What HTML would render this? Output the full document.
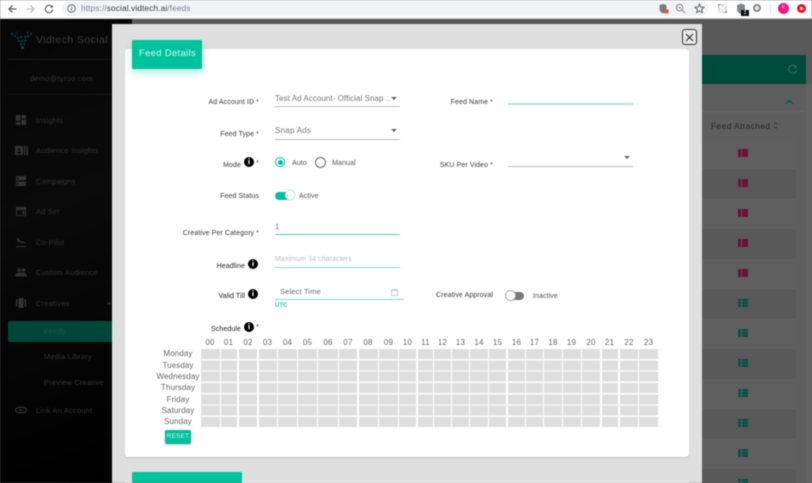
<!DOCTYPE html>
<html><head><meta charset="utf-8"><title>Feeds</title>
<style>
html,body{margin:0;padding:0;width:812px;height:483px;overflow:hidden;background:#5a5a5a}
#r{position:relative;width:812px;height:483px;overflow:hidden;filter:blur(.4px);font-family:"Liberation Sans",sans-serif}
#r div,#r span,#r svg{position:absolute}
#r div span{position:static}
.t{white-space:nowrap;line-height:12px}
.l{font-size:7px;color:#3a3a3a;text-align:right;white-space:nowrap;line-height:12px;letter-spacing:.1px;margin-top:1px}
.k{color:#222}
.m{font-size:7.500px;color:#333;left:36px;white-space:nowrap;line-height:12px;letter-spacing:.2px;margin-top:1px}
.d{font-size:8px;color:#666;white-space:nowrap;line-height:11px;width:50px;text-align:center;left:153px;letter-spacing:.1px}
.h{font-size:8px;color:#666;top:337px;line-height:12px;text-align:center;letter-spacing:.2px}
.c{top:349px;height:79px;background:repeating-linear-gradient(to bottom,#dedede 0,#dedede 10px,#fff 10px,#fff 11.33px)}
.row{left:702px;width:94px;height:30px;background:#5f5f5f}
.ic{left:738px;width:10px;height:8px}
.ic::after{content:"";position:absolute;left:2.500px;top:0;width:.7px;height:8px;background:#5a5a5a}
.re{background:repeating-linear-gradient(#7a0a37 0 2px,#4d2030 2px 3px)}
.gr{background:repeating-linear-gradient(#06503f 0 2px,#2f5a50 2px 3px)}
.i{width:10px;height:10px;border-radius:50%;background:#000;color:#fff;font:bold 8px/10px "Liberation Serif",serif;text-align:center}
.u{height:1px;background:#bdbdbd}
.g{height:1px;background:#6fd9c3}
</style></head><body><div id="r">

<!-- browser bar -->
<div style="left:0;top:0;width:812px;height:18px;background:#fff"></div>
<div style="left:0;top:18px;width:812px;height:1px;background:#ccc"></div>
<div style="left:62px;top:1px;width:646px;height:15px;border-radius:8px;background:#f1f3f4"></div>
<svg style="left:7px;top:4px" width="11" height="10" viewBox="0 0 11 10"><path d="M9.500 5H2M5.500 1.500L2 5l3.500 3.500" fill="none" stroke="#5f6368" stroke-width="1.300"/></svg>
<svg style="left:25px;top:4px" width="11" height="10" viewBox="0 0 11 10"><path d="M1.500 5H9M5.500 1.500L9 5 5.500 8.500" fill="none" stroke="#bcc0c4" stroke-width="1.300"/></svg>
<svg style="left:44px;top:4px" width="10" height="10" viewBox="0 0 10 10"><path d="M8.300 3.200A3.700 3.700 0 1 0 8.700 5.500" fill="none" stroke="#5f6368" stroke-width="1.200"/><path d="M8.800 .8v3H5.800z" fill="#5f6368"/></svg>
<svg style="left:67px;top:4px" width="9" height="9" viewBox="0 0 9 9"><circle cx="4.500" cy="4.500" r="3.800" fill="none" stroke="#5f6368" stroke-width=".9"/><path d="M4.500 4v2.700M4.500 2.300v1" stroke="#5f6368" stroke-width=".9"/></svg>
<div class="t" style="left:81px;top:2px;font-size:8.400px;color:#80868b;letter-spacing:.08px">https://<span style="color:#3c4043">social.vidtech.ai</span>/feeds</div>
<svg style="left:658px;top:3px" width="12" height="12" viewBox="0 0 12 12"><path d="M1.500 2L5 1l3.500 1v4c0 2.500-2 3.800-3.500 4.500C3.500 9.800 1.500 8.500 1.500 6z" fill="#7a7d80"/><rect x="6.500" y="6.500" width="4" height="4" fill="#e8503a"/></svg>
<svg style="left:675px;top:3px" width="11" height="11" viewBox="0 0 11 11"><circle cx="4.500" cy="4.500" r="3.200" fill="none" stroke="#85888a" stroke-width="1"/><path d="M7 7l3 3M3 4.500h3" stroke="#85888a" stroke-width="1"/></svg>
<svg style="left:694px;top:3px" width="11" height="11" viewBox="0 0 11 11"><path d="M5.500 1l1.300 3 3.200.3-2.400 2.100.7 3.100-2.800-1.600-2.800 1.600.7-3.100L1 4.300 4.200 4z" fill="none" stroke="#5f6368" stroke-width="1"/></svg>
<svg style="left:718px;top:4px" width="9" height="9" viewBox="0 0 9 9"><rect width="9" height="9" fill="#dfe1e2"/><path d="M1 1l7 7M8 1L1 8" stroke="#fff" stroke-width="1.200"/><path d="M0 0h3L0 3zM9 9H6l3-3z" fill="#8f9295"/></svg>
<svg style="left:736px;top:3px" width="10" height="11" viewBox="0 0 10 11"><path d="M1 2l4-1.500L9 2v5c0 2-2 3-4 4-2-1-4-2-4-4z" fill="#85888a"/></svg>
<div style="left:741px;top:10px;width:8px;height:6px;background:#111;color:#fff;font-size:5px;line-height:6px;text-align:center">1</div>
<div style="left:753px;top:4px;width:4px;height:4px;border:2.500px solid #85888a;border-radius:50%;background:#eee"></div>
<div style="left:770px;top:3px;width:1px;height:11px;background:#e2e3e4"></div>
<div style="left:778px;top:3px;width:11px;height:11px;border-radius:50%;background:#f4127f;color:#ffb0d5;font-size:6px;line-height:11px;text-align:center">K</div>
<div style="left:797px;top:4px;width:9px;height:9px;border-radius:50%;background:#f20f1f"></div>
<div style="left:800px;top:7px;width:3px;height:3px;border-radius:50%;background:#fff"></div>

<!-- sidebar -->
<div style="left:0;top:19px;width:132px;height:464px;background:linear-gradient(160deg,#070707 0%,#0a0a0a 40%,#050505 70%,#000 100%)"></div>
<svg style="left:10px;top:31px" width="24" height="18" viewBox="0 0 24 18"><g fill="#0b3c4c"><rect x="1" y="2" width="2" height="2"/><rect x="4" y="4" width="2" height="2"/><rect x="7" y="6" width="2" height="2"/><rect x="10" y="5" width="2" height="2"/><rect x="14" y="5" width="2" height="2"/><rect x="17" y="4" width="2" height="2"/><rect x="20" y="2" width="2" height="2"/><rect x="8" y="9" width="2" height="2"/><rect x="11" y="9" width="2" height="2"/><rect x="14" y="9" width="2" height="2"/><rect x="10" y="12" width="2" height="2"/><rect x="13" y="12" width="2" height="2"/><rect x="11" y="15" width="3" height="3"/><rect x="6" y="1" width="1.500" height="1.500"/><rect x="17" y="1" width="1.500" height="1.500"/></g></svg>
<div class="t" style="left:36px;top:33px;font-size:10.500px;line-height:14px;color:#3c3c3c;letter-spacing:.4px">Vidtech Social</div>
<div style="left:8px;top:59px;width:104px;height:1px;background:#181818"></div>
<div class="t" style="left:30px;top:73px;font-size:7.500px;color:#333;letter-spacing:.25px">demo@tyroo.com</div>
<div style="left:8px;top:94px;width:104px;height:1px;background:#181818"></div>

<svg style="left:16px;top:115px" width="10" height="10" viewBox="0 0 10 10" fill="#333"><rect width="4.500" height="6"/><rect x="5.500" width="4.500" height="3.500"/><rect y="7" width="4.500" height="3"/><rect x="5.500" y="4.500" width="4.500" height="5.500"/></svg>
<div class="m" style="top:114px">Insights</div>
<svg style="left:15px;top:146px" width="13" height="9" viewBox="0 0 13 9" fill="#333"><rect width="8" height="9"/><rect x="9" width="1.500" height="9"/><rect x="11.500" width="1.500" height="9"/><circle cx="4" cy="3.500" r="1.300" fill="#0a0a0a"/><rect x="2" y="5.500" width="4" height="2" fill="#0a0a0a"/></svg>
<div class="m" style="top:144px">Audience Insights</div>
<svg style="left:16px;top:176px" width="10" height="10" viewBox="0 0 10 10" fill="#333"><rect width="10" height="4.300"/><rect y="5.500" width="10" height="4.500"/><rect x="1" y="1.500" width="1.500" height="1.300" fill="#0a0a0a"/><rect x="1" y="7" width="1.500" height="1.300" fill="#0a0a0a"/></svg>
<div class="m" style="top:175px">Campaigns</div>
<svg style="left:16px;top:207px" width="10" height="9" viewBox="0 0 10 9"><rect x=".5" y=".5" width="9" height="8" fill="none" stroke="#333"/><rect y="1" width="10" height="2" fill="#333"/><rect x="6.500" y="4" width="2" height="3" fill="#333"/></svg>
<div class="m" style="top:205px">Ad Set</div>
<svg style="left:16px;top:237px" width="10" height="10" viewBox="0 0 10 10"><path d="M0 9.500h10" stroke="#333"/><path d="M1 1l1 0 2 3 5 1v1.200L2.500 5 1 3z" fill="#333"/></svg>
<div class="m" style="top:236px">Co-Pilot</div>
<svg style="left:15px;top:268px" width="12" height="9" viewBox="0 0 12 9" fill="#333"><circle cx="4" cy="2" r="1.800"/><circle cx="8.500" cy="2" r="1.800"/><path d="M0 8.500c0-3 2.500-4 6-4s6 1 6 4z"/></svg>
<div class="m" style="top:266px">Custom Audience</div>
<svg style="left:16px;top:298px" width="10" height="10" viewBox="0 0 10 10" fill="#333"><rect x="2.500" y="0" width="5" height="10"/><rect x="0" y="1.500" width="1.500" height="7"/><rect x="8.500" y="1.500" width="1.500" height="7"/></svg>
<div class="m" style="top:297px">Creatives</div>
<div style="left:107px;top:302px;width:0;height:0;border:2px solid transparent;border-bottom-color:#444;border-top:0"></div>
<div style="left:8px;top:321px;width:104px;height:21px;border-radius:2px 0 0 2px;background:#00473a"></div>
<div class="m" style="left:44px;top:325px;color:#1d5a4c">Feeds</div>
<div class="m" style="left:44px;top:350px">Media Library</div>
<div class="m" style="left:44px;top:376px">Preview Creative</div>
<svg style="left:15px;top:406px" width="12" height="8" viewBox="0 0 12 8"><rect x=".7" y="1.500" width="10.600" height="5" rx="2.500" fill="none" stroke="#333" stroke-width="1.200"/><path d="M4 4h4" stroke="#333"/></svg>
<div class="m" style="top:404px">Link An Account</div>

<!-- right background -->
<div style="left:132px;top:19px;width:680px;height:464px;background:#595959"></div>
<div style="left:806px;top:84px;width:6px;height:399px;background:#636363"></div>
<div style="left:702px;top:84px;width:104px;height:399px;background:#5e5e5e"></div>
<div style="left:702px;top:55px;width:104px;height:29px;background:#004a3c"></div>
<svg style="left:787px;top:64px" width="11" height="11" viewBox="0 0 11 11"><path d="M9.300 3.300A4 4 0 1 0 9.500 6.500" fill="none" stroke="#2c6d60" stroke-width="1.100"/><path d="M9.800 1v3.200H6.600z" fill="#2c6d60"/></svg>
<svg style="left:785px;top:99px" width="9" height="6" viewBox="0 0 9 6"><path d="M1 5l3.500-3.500L8 5" fill="none" stroke="#0a5a4b" stroke-width="1.400"/></svg>
<div style="left:702px;top:111px;width:104px;height:1px;background:#666"></div>
<div class="t" style="left:711px;top:120px;font-size:8.500px;color:#262626;letter-spacing:.35px">Feed Attached</div>
<svg style="left:773px;top:121px" width="5" height="9" viewBox="0 0 5 9"><path d="M2.500 .5L4.500 3.500H.5zM2.500 8.500L.5 5.500h4z" fill="#444"/></svg>
<div class="row" style="top:139px"></div><div class="row" style="top:199px"></div><div class="row" style="top:259px"></div><div class="row" style="top:319px"></div><div class="row" style="top:379px"></div><div class="row" style="top:439px"></div>
<div style="left:702px;top:169px;width:94px;height:30px;background:#595959"></div><div style="left:702px;top:229px;width:94px;height:30px;background:#595959"></div><div style="left:702px;top:289px;width:94px;height:30px;background:#595959"></div><div style="left:702px;top:349px;width:94px;height:30px;background:#595959"></div><div style="left:702px;top:409px;width:94px;height:30px;background:#595959"></div><div style="left:702px;top:469px;width:94px;height:14px;background:#595959"></div>

<div class="ic re" style="top:149px"></div>
<div class="ic re" style="top:179px"></div>
<div class="ic re" style="top:209px"></div>
<div class="ic re" style="top:239px"></div>
<div class="ic re" style="top:269px"></div>
<div class="ic gr" style="top:299px"></div>
<div class="ic gr" style="top:329px"></div>
<div class="ic gr" style="top:359px"></div>
<div class="ic gr" style="top:389px"></div>
<div class="ic gr" style="top:419px"></div>
<div class="ic gr" style="top:449px"></div>
<div class="ic gr" style="top:479px"></div>

<!-- modal -->
<div style="left:112px;top:24px;width:590px;height:459px;background:#dfdfdf"></div>
<div style="left:125px;top:49px;width:564px;height:408px;background:#fff;border-radius:3px;box-shadow:0 1px 1px rgba(0,0,0,.12)"></div>
<div style="left:125px;top:482px;width:564px;height:1px;background:#fff"></div>
<div style="left:682px;top:29px;width:13px;height:14px;border:1.300px solid #333;border-radius:3px;background:#e8e8e8"></div>
<svg style="left:684px;top:32px" width="11" height="11" viewBox="0 0 11 11"><path d="M2 2l7 7M9 2l-7 7" stroke="#222" stroke-width="1"/></svg>
<div style="left:132px;top:40px;width:70px;height:29px;background:#00c29d;border-radius:1px;box-shadow:0 4px 8px rgba(0,194,157,.3)"></div>
<div class="t" style="left:139px;top:47px;font-size:9.500px;line-height:13px;color:#d6f6ee;letter-spacing:.3px">Feed Details</div>
<div style="left:132px;top:472px;width:110px;height:11px;background:#00c29d;border-radius:1px"></div>

<!-- left form -->
<div class="l" style="right:553px;top:96px">Ad Account ID<span> *</span></div>
<div class="t" style="left:275px;top:93px;font-size:8px;color:#777;letter-spacing:.05px">Test Ad Account- Official Snap ..</div>
<div style="left:391px;top:97px;width:0;height:0;border:3px solid transparent;border-top:3px solid #666;border-bottom:0"></div>
<div class="u" style="left:275px;top:106px;width:125px"></div>
<div class="l" style="right:553px;top:128px">Feed Type<span> *</span></div>
<div class="t" style="left:275px;top:125px;font-size:8px;color:#777;letter-spacing:.25px">Snap Ads</div>
<div style="left:391px;top:129px;width:0;height:0;border:3px solid transparent;border-top:3px solid #666;border-bottom:0"></div>
<div class="u" style="left:275px;top:139px;width:125px"></div>
<div class="l" style="right:571px;top:159px">Mode</div>
<div class="i" style="left:244px;top:157px">i</div>
<div class="l" style="left:256px;top:157px">*</div>
<div style="left:275px;top:157px;width:8px;height:8px;border:1px solid #00c29d;border-radius:50%"></div>
<div style="left:277.500px;top:159.500px;width:5px;height:5px;background:#00c29d;border-radius:50%"></div>
<div class="t" style="left:292px;top:157px;font-size:7.200px;color:#555">Auto</div>
<div style="left:315px;top:157px;width:9px;height:9px;border:1px solid #666;border-radius:50%"></div>
<div class="t" style="left:332px;top:157px;font-size:7.200px;color:#555">Manual</div>
<div class="l" style="right:553px;top:190px">Feed Status</div>
<div style="left:275px;top:192px;width:16px;height:8px;background:#00c29d;border-radius:4px"></div>
<div style="left:285px;top:190px;width:8px;height:8px;border:1px solid #bfe;border-radius:50%;background:#fff;box-shadow:0 0 1px #888"></div>
<div class="t" style="left:299px;top:190px;font-size:7.200px;color:#555">Active</div>
<div class="l" style="right:553px;top:227px">Creative Per Category<span> *</span></div>
<div class="t" style="left:275px;top:221px;font-size:7.500px;color:#666">1</div>
<div class="g" style="left:275px;top:234px;width:125px;background:#49cdb3"></div>
<div class="l k" style="right:567px;top:260px">Headline</div>
<div class="i" style="left:248px;top:259px">i</div>
<div class="t" style="left:275px;top:254px;font-size:7px;color:#bbb;letter-spacing:.1px">Maximum 34 characters</div>
<div class="g" style="left:275px;top:267px;width:125px;background:#7fdcc9"></div>
<div class="l k" style="right:567px;top:290px">Valid Till</div>
<div class="i" style="left:248px;top:289px">i</div>
<div class="t" style="left:280px;top:286px;font-size:7.500px;color:#666;letter-spacing:.15px">Select Time</div>
<svg style="left:391px;top:288px" width="7" height="8" viewBox="0 0 7 8"><rect x=".5" y="1.500" width="6" height="6" fill="none" stroke="#c8c8c8"/><rect y="1" width="7" height="2" fill="#ccc"/></svg>
<div class="g" style="left:275px;top:299px;width:129px;background:#7fdcc9"></div>
<div class="t" style="left:275px;top:300px;font-size:6px;color:#1fd0ad;font-weight:bold">UTC</div>
<div class="l k" style="right:571px;top:323px">Schedule</div>
<div class="i" style="left:244px;top:322px">i</div>
<div class="l" style="left:256px;top:321px">*</div>

<!-- right form -->
<div class="l" style="right:319px;top:96px">Feed Name<span> *</span></div>
<div style="left:508px;top:103px;width:125px;height:1.500px;background:#a5e8da"></div>
<div class="l" style="right:319px;top:159px">SKU Per Video<span> *</span></div>
<div style="left:624px;top:156px;width:0;height:0;border:3px solid transparent;border-top:3px solid #666;border-bottom:0"></div>
<div class="u" style="left:508px;top:166px;width:125px"></div>
<div class="l" style="right:319px;top:289px">Creative Approval</div>
<div style="left:507px;top:292px;width:17px;height:8px;background:#777;border-radius:4px"></div>
<div style="left:505px;top:290px;width:9px;height:9px;border:1px solid #aaa;border-radius:50%;background:#fff"></div>
<div class="t" style="left:533px;top:290px;font-size:7.200px;color:#555">Inactive</div>

<!-- schedule grid -->
<div class="h" style="left:201px;width:18px">00</div><div class="c" style="left:201px;width:18.500px"></div>
<div class="h" style="left:220px;width:17px">01</div><div class="c" style="left:220.700px;width:16.500px"></div>
<div class="h" style="left:239px;width:18px">02</div><div class="c" style="left:239px;width:18px"></div>
<div class="h" style="left:258px;width:19px">03</div><div class="c" style="left:258.500px;width:18.500px"></div>
<div class="h" style="left:278px;width:19px">04</div><div class="c" style="left:278.300px;width:18.700px"></div>
<div class="h" style="left:298px;width:19px">05</div><div class="c" style="left:298px;width:19px"></div>
<div class="h" style="left:318px;width:20px">06</div><div class="c" style="left:318.300px;width:19.700px"></div>
<div class="h" style="left:339px;width:18px">07</div><div class="c" style="left:339px;width:18px"></div>
<div class="h" style="left:358px;width:20px">08</div><div class="c" style="left:358.500px;width:19.500px"></div>
<div class="h" style="left:379px;width:19px">09</div><div class="c" style="left:379px;width:19px"></div>
<div class="h" style="left:399px;width:17px">10</div><div class="c" style="left:399.300px;width:17px"></div>
<div class="h" style="left:418px;width:15px">11</div><div class="c" style="left:418px;width:15px"></div>
<div class="h" style="left:434px;width:17px">12</div><div class="c" style="left:434px;width:17px"></div>
<div class="h" style="left:452px;width:17px">13</div><div class="c" style="left:452px;width:17px"></div>
<div class="h" style="left:470px;width:18px">14</div><div class="c" style="left:470px;width:17.700px"></div>
<div class="h" style="left:489px;width:17px">15</div><div class="c" style="left:489px;width:17.300px"></div>
<div class="h" style="left:508px;width:17px">16</div><div class="c" style="left:508px;width:17px"></div>
<div class="h" style="left:526px;width:17px">17</div><div class="c" style="left:526px;width:17px"></div>
<div class="h" style="left:544px;width:18px">18</div><div class="c" style="left:544px;width:18px"></div>
<div class="h" style="left:563px;width:17px">19</div><div class="c" style="left:563px;width:17.500px"></div>
<div class="h" style="left:582px;width:18px">20</div><div class="c" style="left:582px;width:18px"></div>
<div class="h" style="left:601px;width:17px">21</div><div class="c" style="left:601.500px;width:16.700px"></div>
<div class="h" style="left:620px;width:18px">22</div><div class="c" style="left:619.700px;width:18px"></div>
<div class="h" style="left:639px;width:19px">23</div><div class="c" style="left:639px;width:19px"></div>

<div class="d" style="top:348px">Monday</div>
<div class="d" style="top:359.500px">Tuesday</div>
<div class="d" style="top:371px">Wednesday</div>
<div class="d" style="top:382px">Thursday</div>
<div class="d" style="top:393.500px">Friday</div>
<div class="d" style="top:405px">Saturday</div>
<div class="d" style="top:416px">Sunday</div>
<div style="left:165px;top:430px;width:26px;height:14px;background:#00c29d;border-radius:2px;box-shadow:0 1px 2px rgba(120,60,160,.35);color:#c9f3ea;font-size:6.500px;line-height:14px;text-align:center;letter-spacing:.2px">RESET</div>
</div></body></html>
